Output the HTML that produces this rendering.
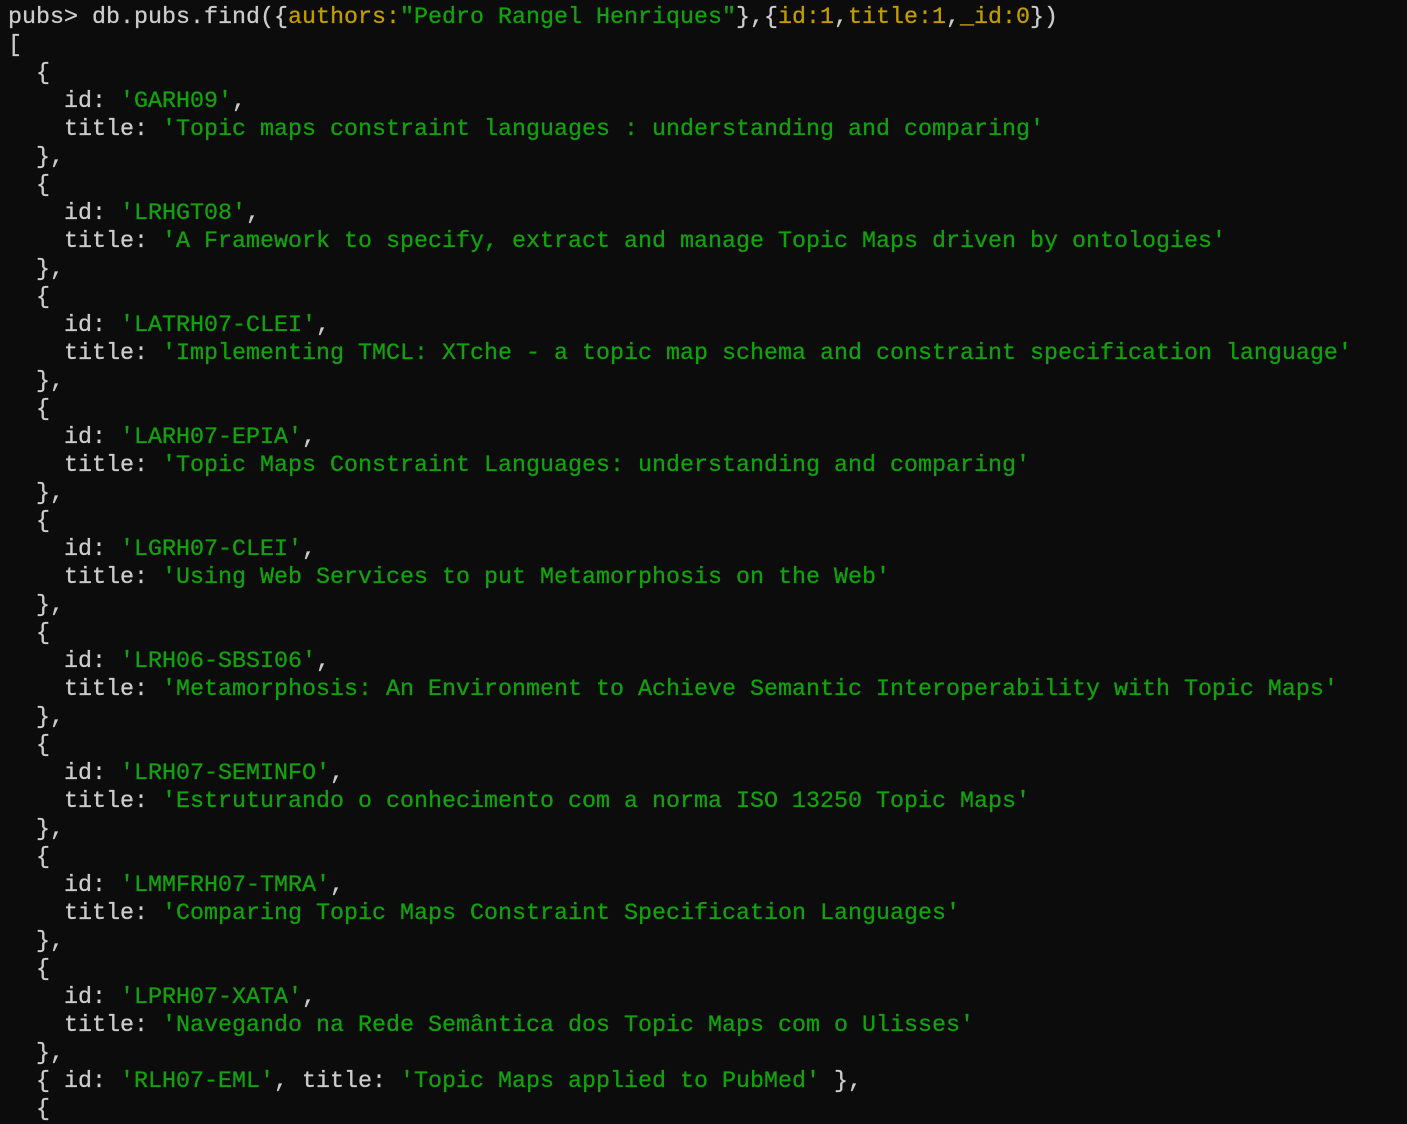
<!DOCTYPE html>
<html><head><meta charset="utf-8"><style>
html,body{margin:0;padding:0;background:#0c0c0c;width:1407px;height:1110px;overflow:hidden}
pre{margin:0;position:absolute;left:8px;top:4px;font-family:"Liberation Mono","DejaVu Sans Mono",monospace;font-size:23.33px;line-height:28px;color:#cccccc;white-space:pre;-webkit-text-stroke:0.3px currentColor}
.g{color:#13a10e}.y{color:#c19c00}
</style></head><body><pre>pubs&gt; db.pubs.find({<span class="y">authors:</span><span class="g">"Pedro Rangel Henriques"</span>},{<span class="y">id:1</span>,<span class="y">title:1</span>,<span class="y">_id:0</span>})
[
  {
    id: <span class="g">'GARH09'</span>,
    title: <span class="g">'Topic maps constraint languages : understanding and comparing'</span>
  },
  {
    id: <span class="g">'LRHGT08'</span>,
    title: <span class="g">'A Framework to specify, extract and manage Topic Maps driven by ontologies'</span>
  },
  {
    id: <span class="g">'LATRH07-CLEI'</span>,
    title: <span class="g">'Implementing TMCL: XTche - a topic map schema and constraint specification language'</span>
  },
  {
    id: <span class="g">'LARH07-EPIA'</span>,
    title: <span class="g">'Topic Maps Constraint Languages: understanding and comparing'</span>
  },
  {
    id: <span class="g">'LGRH07-CLEI'</span>,
    title: <span class="g">'Using Web Services to put Metamorphosis on the Web'</span>
  },
  {
    id: <span class="g">'LRH06-SBSI06'</span>,
    title: <span class="g">'Metamorphosis: An Environment to Achieve Semantic Interoperability with Topic Maps'</span>
  },
  {
    id: <span class="g">'LRH07-SEMINFO'</span>,
    title: <span class="g">'Estruturando o conhecimento com a norma ISO 13250 Topic Maps'</span>
  },
  {
    id: <span class="g">'LMMFRH07-TMRA'</span>,
    title: <span class="g">'Comparing Topic Maps Constraint Specification Languages'</span>
  },
  {
    id: <span class="g">'LPRH07-XATA'</span>,
    title: <span class="g">'Navegando na Rede Semântica dos Topic Maps com o Ulisses'</span>
  },
  { id: <span class="g">'RLH07-EML'</span>, title: <span class="g">'Topic Maps applied to PubMed'</span> },
  {
</pre></body></html>
